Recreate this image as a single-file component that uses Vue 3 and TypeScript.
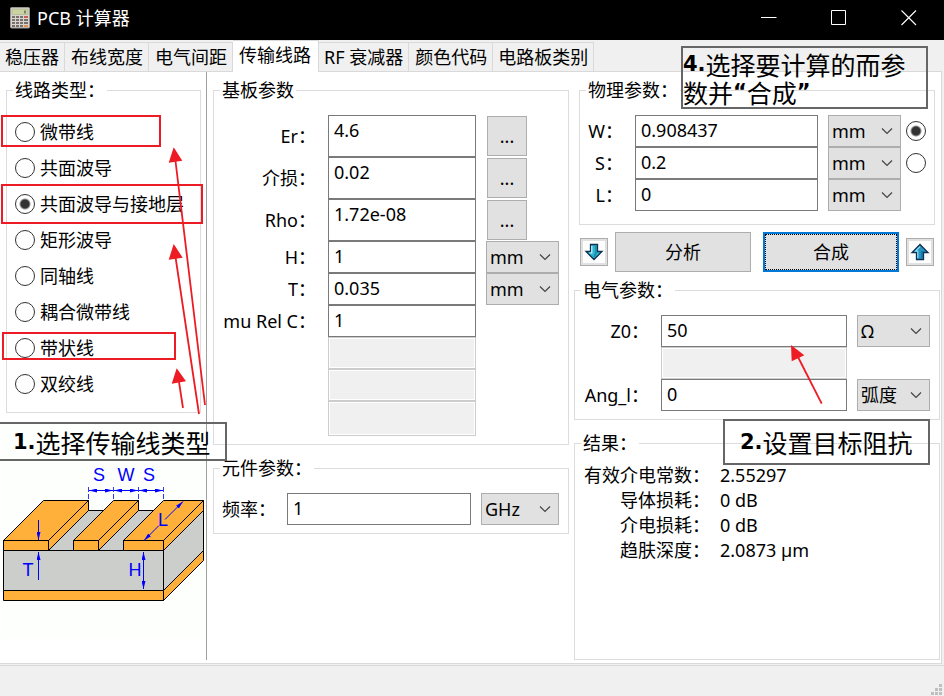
<script setup lang="ts">
import { ref, reactive } from 'vue'

interface Field {
  id: string
  label: string
  value: string
  tall?: boolean
  browse?: boolean
  unit?: string
  disabled?: boolean
  pick?: boolean
}

const tabs = ['稳压器', '布线宽度', '电气间距', '传输线路', 'RF 衰减器', '颜色代码', '电路板类别']
const activeTab = ref(3)

const lineTypes = ['微带线', '共面波导', '共面波导与接地层', '矩形波导', '同轴线', '耦合微带线', '带状线', '双绞线']
const lineType = ref('共面波导与接地层')

const substrate = reactive<Field[]>([
  { id: 'er', label: 'Er：', value: '4.6', tall: true, browse: true },
  { id: 'tand', label: '介损：', value: '0.02', tall: true, browse: true },
  { id: 'rho', label: 'Rho：', value: '1.72e-08', tall: true, browse: true },
  { id: 'h', label: 'H：', value: '1', unit: 'mm' },
  { id: 't', label: 'T：', value: '0.035', unit: 'mm' },
  { id: 'murel', label: 'mu Rel C：', value: '1' },
  { id: 'sub7', label: '', value: '', disabled: true },
  { id: 'sub8', label: '', value: '', disabled: true },
  { id: 'sub9', label: '', value: '', disabled: true },
])

const physical = reactive<Field[]>([
  { id: 'w', label: 'W：', value: '0.908437', unit: 'mm', pick: true },
  { id: 's', label: 'S：', value: '0.2', unit: 'mm', pick: true },
  { id: 'l', label: 'L：', value: '0', unit: 'mm' },
])
const target = ref('w')

const electrical = reactive<Field[]>([
  { id: 'z0', label: 'Z0：', value: '50', unit: 'Ω' },
  { id: 'el2', label: '', value: '', disabled: true },
  { id: 'ang', label: 'Ang_l：', value: '0', unit: '弧度' },
])

const frequency = ref('1')
const frequencyUnit = ref('GHz')

const unitChoices: Record<string, string[]> = {
  mm: ['mm', 'mil', 'cm'],
  'Ω': ['Ω', 'kΩ'],
  '弧度': ['弧度', '度'],
}
const choicesFor = (unit: string): string[] => Object.values(unitChoices).find((c) => c.includes(unit)) ?? [unit]

const results = [
  { name: '有效介电常数：', value: '2.55297' },
  { name: '导体损耗：', value: '0 dB' },
  { name: '介电损耗：', value: '0 dB' },
  { name: '趋肤深度：', value: '2.0873 µm' },
]
</script>

<template>
  <div class="window" lang="zh-CN">
    <header class="titlebar">
      <svg class="app-icon" width="20" height="22" viewBox="0 0 20 22" aria-hidden="true">
        <rect x="0.5" y="0.5" width="19" height="20.5" rx="1" fill="#d8d4cf" stroke="#9a9590" />
        <rect x="2" y="2" width="16" height="5.5" fill="#c9d3a4" stroke="#a9b088" stroke-width="0.6" />
        <path d="M14 3.5h2v3h-2z" fill="#7c8466" />
        <g fill="#77716d">
          <path d="M2 9h3v2H2zM6 9h3v2H6zM10 9h3v2h-3zM2 12h3v2H2zM6 12h3v2H6zM10 12h3v2h-3zM14 12h4v2h-4zM2 15h3v2H2zM6 15h3v2H6zM10 15h3v2h-3zM14 15h4v2h-4zM2 18h3v2H2zM6 18h3v2H6zM10 18h3v2h-3z" />
        </g>
        <path d="M14 9h4v2h-4z" fill="#c8605a" />
        <path d="M14 18h4v2h-4z" fill="#e09050" />
      </svg>
      <h1 class="title">PCB 计算器</h1>
      <div class="window-buttons">
        <button type="button" aria-label="最小化">
          <svg width="16" height="16" viewBox="0 0 16 16"><path d="M0 7.5h15.5" stroke="#fff" fill="none" /></svg>
        </button>
        <button type="button" aria-label="最大化">
          <svg width="16" height="16" viewBox="0 0 16 16"><path d="M0.5 0.5h14v14h-14z" stroke="#fff" fill="none" /></svg>
        </button>
        <button type="button" aria-label="关闭">
          <svg width="16" height="16" viewBox="0 0 16 16"><path d="M0.5 0.5l14.5 14.5M15 0.5l-14.5 14.5" stroke="#fff" stroke-width="1.1" fill="none" /></svg>
        </button>
      </div>
    </header>

    <div class="tabs" role="tablist">
      <button
        v-for="(tab, i) in tabs"
        :key="tab"
        type="button"
        role="tab"
        class="tab"
        :class="{ active: i === activeTab }"
        :aria-selected="i === activeTab"
        @click="activeTab = i"
      >{{ tab }}</button>
    </div>

    <main class="page">
      <section class="col-left">
        <fieldset class="group types">
          <legend>线路类型：</legend>
          <label v-for="name in lineTypes" :key="name" class="type-row">
            <input v-model="lineType" type="radio" class="radio" name="line-type" :value="name" />
            <span>{{ name }}</span>
          </label>
        </fieldset>

        <svg class="diagram" width="204" height="217" viewBox="2 421 204 217" role="img" aria-label="共面波导与接地层">
          <defs>
            <marker id="tip" viewBox="0 0 8 4" refX="8" refY="2" markerWidth="8" markerHeight="4" orient="auto-start-reverse" markerUnits="userSpaceOnUse">
              <path d="M0 0L8 2L0 4z" fill="#00f" />
            </marker>
          </defs>
          <rect x="2" y="421" width="204" height="217" fill="#fcfffc" />
          <g stroke="#000" stroke-linejoin="round">
            <g fill="#cccecb">
              <path d="M3.5 550.5L43.5 510.5H203.5L163.5 550.5z" />
              <path d="M3.5 550.5H163.5V590.5H3.5z" />
              <path d="M163.5 550.5L203.5 510.5V550.5L163.5 590.5z" />
            </g>
            <g fill="#ffb03b">
              <path d="M3.5 590.5H163.5V600.5H3.5z" />
              <path d="M163.5 590.5L203.5 550.5V560.5L163.5 600.5z" />
              <path d="M3.5 540.5H48.5V550.5H3.5zM3.5 540.5L43.5 500.5H88.5L48.5 540.5zM48.5 540.5L88.5 500.5V510.5L48.5 550.5z" />
              <path d="M73.5 540.5H98.5V550.5H73.5zM73.5 540.5L113.5 500.5H138.5L98.5 540.5zM98.5 540.5L138.5 500.5V510.5L98.5 550.5z" />
              <path d="M123.5 540.5H163.5V550.5H123.5zM123.5 540.5L163.5 500.5H203.5L163.5 540.5zM163.5 540.5L203.5 500.5V510.5L163.5 550.5z" />
            </g>
          </g>
          <g stroke="#00f" fill="none">
            <path d="M88.5 487V500M113.5 487V500M138.5 487V500M163.5 487V500" stroke-dasharray="5 2" stroke-width="0.8" />
            <path d="M89 490.5H113" marker-start="url(#tip)" marker-end="url(#tip)" />
            <path d="M114 490.5H138" marker-start="url(#tip)" marker-end="url(#tip)" />
            <path d="M139 490.5H163" marker-start="url(#tip)" marker-end="url(#tip)" />
            <path d="M144 540.5L159 525.5" marker-start="url(#tip)" />
            <path d="M165 519.5L183 501.5" marker-end="url(#tip)" />
            <path d="M38.5 520V540" marker-end="url(#tip)" />
            <path d="M38.5 580V552" marker-end="url(#tip)" />
            <path d="M143.5 552V589" marker-start="url(#tip)" marker-end="url(#tip)" />
          </g>
          <g class="diagram-text">
            <text x="99" y="481">S</text>
            <text x="126" y="481">W</text>
            <text x="149" y="481">S</text>
            <text x="163" y="526">L</text>
            <text x="28" y="576">T</text>
            <text x="135" y="576">H</text>
          </g>
        </svg>

        <svg class="marks" width="207" height="420" viewBox="0 0 207 420" aria-hidden="true">
          <g stroke="#ed1c24" fill="none" stroke-width="2">
            <rect x="2" y="44" width="158" height="30" />
            <rect x="2" y="113" width="200" height="38" />
            <rect x="3" y="261" width="172" height="26" />
          </g>
          <g stroke="#ed1c24" stroke-width="1.8">
            <path d="M205 333L175 85M199 342L175.500 185M183 336L179 310" fill="none" />
          </g>
          <path d="M173.700 75.300L168.700 90.700L182.300 88.700zM173.700 172L168.700 187.700L182.700 185.700zM176.700 296.300L171.700 311.700L186 309.300z" fill="#ed1c24" />
        </svg>
        <p class="note note-type"><b>1.</b><span>选择传输线类型</span></p>
      </section>

      <section class="col-mid">
        <fieldset class="group">
          <legend>基板参数</legend>
          <div class="substrate">
            <template v-for="f in substrate" :key="f.id">
              <label :for="f.id" class="name">{{ f.label }}</label>
              <input :id="f.id" v-model="f.value" type="text" class="box" :class="{ tall: f.tall }" :disabled="f.disabled" />
              <div class="extra">
                <button v-if="f.browse" type="button" class="browse">...</button>
                <span v-if="f.unit" class="unit">
                  <select v-model="f.unit" :aria-label="f.label">
                    <option v-for="u in choicesFor(f.unit)" :key="u">{{ u }}</option>
                  </select>
                  <svg width="12" height="8" viewBox="0 0 12 8"><path d="M1 1.500L6 6.500L11 1.500" stroke="#444" stroke-width="1.2" fill="none" /></svg>
                </span>
              </div>
            </template>
          </div>
        </fieldset>

        <fieldset class="group">
          <legend>元件参数：</legend>
          <div class="component">
            <label for="freq">频率：</label>
            <input id="freq" v-model="frequency" type="text" class="box" />
            <span class="unit">
              <select v-model="frequencyUnit" aria-label="频率">
                <option>GHz</option>
                <option>MHz</option>
                <option>kHz</option>
              </select>
              <svg width="12" height="8" viewBox="0 0 12 8"><path d="M1 1.500L6 6.500L11 1.500" stroke="#444" stroke-width="1.2" fill="none" /></svg>
            </span>
          </div>
        </fieldset>
      </section>

      <section class="col-right">
        <fieldset class="group phys">
          <legend>物理参数：</legend>
          <div class="physical">
            <template v-for="f in physical" :key="f.id">
              <label :for="f.id" class="name">{{ f.label }}</label>
              <input :id="f.id" v-model="f.value" type="text" class="box" />
              <span class="unit">
                <select v-model="f.unit" :aria-label="f.label">
                  <option v-for="u in choicesFor(f.unit ?? '')" :key="u">{{ u }}</option>
                </select>
                <svg width="12" height="8" viewBox="0 0 12 8"><path d="M1 1.500L6 6.500L11 1.500" stroke="#444" stroke-width="1.2" fill="none" /></svg>
              </span>
              <div class="pick">
                <input v-if="f.pick" v-model="target" type="radio" class="radio" name="target" :value="f.id" :aria-label="f.label" />
              </div>
            </template>
          </div>
        </fieldset>

        <div class="actions">
          <button type="button" class="arrow" aria-label="分析">
            <svg width="22" height="22" viewBox="0 0 22 22">
              <path d="M7.500 3.500H14.500V10.500H19L11 18.500L3 10.500H7.500z" fill="#2fb4cf" stroke="#12304f" stroke-width="1.3" />
              <path d="M8.800 4.800V11.800H6.500" stroke="#b4f0f8" stroke-width="1.3" fill="none" />
              <path d="M13 5V12L11 16" stroke="#1888a8" stroke-width="1.5" fill="none" />
            </svg>
          </button>
          <button type="button" class="action">分析</button>
          <button type="button" class="action default">合成</button>
          <button type="button" class="arrow" aria-label="合成">
            <svg width="22" height="22" viewBox="0 0 22 22">
              <path d="M7.500 18.500H14.500V11.500H19L11 3.500L3 11.500H7.500z" fill="#2394c4" stroke="#12304f" stroke-width="1.3" />
              <path d="M8.800 17.200V10.200H6.500L11 5.600" stroke="#8fdcf0" stroke-width="1.2" fill="none" />
              <path d="M13 17V10" stroke="#1470a0" stroke-width="1.6" fill="none" />
            </svg>
          </button>
        </div>

        <fieldset class="group">
          <legend>电气参数：</legend>
          <div class="electrical">
            <template v-for="f in electrical" :key="f.id">
              <label :for="f.id" class="name">{{ f.label }}</label>
              <input :id="f.id" v-model="f.value" type="text" class="box" :disabled="f.disabled" />
              <div class="extra">
                <span v-if="f.unit" class="unit">
                  <select v-model="f.unit" :aria-label="f.label">
                    <option v-for="u in choicesFor(f.unit)" :key="u">{{ u }}</option>
                  </select>
                  <svg width="12" height="8" viewBox="0 0 12 8"><path d="M1 1.500L6 6.500L11 1.500" stroke="#444" stroke-width="1.2" fill="none" /></svg>
                </span>
              </div>
            </template>
          </div>
        </fieldset>

        <fieldset class="group results-group">
          <legend>结果：</legend>
          <dl class="results">
            <template v-for="r in results" :key="r.name">
              <dt>{{ r.name }}</dt>
              <dd>{{ r.value }}</dd>
            </template>
          </dl>
        </fieldset>

        <svg class="pointer" width="34" height="62" viewBox="0 0 34 62" aria-hidden="true">
          <path d="M8 13L31.700 59.700" stroke="#ed1c24" stroke-width="1.8" fill="none" />
          <path d="M1 1L1.700 17.300L14.300 11.300z" fill="#ed1c24" />
        </svg>
        <div class="note note-target">
          <p><b>4.</b><span>选择要计算的而参</span></p>
          <p><span>数并</span><b>“</b><span>合成</span><b>”</b></p>
        </div>
        <p class="note note-impedance"><b>2.</b><span>设置目标阻抗</span></p>
      </section>
    </main>

    <footer class="statusbar">
      <svg width="12" height="12" viewBox="0 0 12 12" aria-hidden="true">
        <path d="M8 0h3v3h-3zM4 4h3v3h-3zM8 4h3v3h-3zM0 8h3v3h-3zM4 8h3v3h-3zM8 8h3v3h-3z" fill="#bfbfbf" />
      </svg>
    </footer>
  </div>
</template>

<style>
body {
  background: #f0f0f0;
}
</style>

<style scoped>
.window,
.window * {
  box-sizing: border-box;
}
.window {
  display: flex;
  flex-direction: column;
  min-height: 100vh;
  background: #f0f0f0;
  color: #000;
  font: 18px/24px "Noto Sans", "Noto Sans CJK SC", sans-serif;
}
button,
input,
select {
  font: inherit;
  color: inherit;
  margin: 0;
  border-radius: 0;
}

.titlebar {
  display: flex;
  align-items: center;
  height: 40px;
  padding-left: 10px;
  padding-bottom: 5px;
  background: #000;
  color: #fff;
}
.title {
  margin: 0 auto 0 7px;
  font-size: 18px;
  font-weight: 400;
}
.window-buttons {
  display: flex;
}
.window-buttons button {
  display: grid;
  place-items: center;
  width: 70px;
  height: 34px;
  padding: 0;
  border: 0;
  background: none;
}

.tabs {
  display: flex;
  align-items: flex-end;
  height: 31px;
}
.tab {
  height: 29px;
  padding: 0 5px;
  border: 1px solid #d9d9d9;
  border-width: 1px 1px 0 0;
  background: #f0f0f0;
  white-space: nowrap;
}
.tab:nth-child(2),
.tab:nth-child(3),
.tab:nth-child(6) {
  padding-left: 6px;
}
.tab.active {
  position: relative;
  height: 32px;
  margin-bottom: -1px;
  padding: 0 7px 3px 6px;
  background: #fff;
}

.page {
  flex: 1;
  display: flex;
  margin-right: 2px;
  padding: 0 1px 3px 0;
  border: 1px solid #d9d9d9;
  border-left: 0;
  background: #fff;
}
.col-left {
  position: relative;
  flex: none;
  width: 207px;
  margin-right: 6px;
  padding-top: 6px;
  border-right: 1px solid #a0a0a0;
}
.col-mid {
  flex: 356 1 0;
  min-width: 0;
  display: flex;
  flex-direction: column;
  gap: 11px;
  margin-right: 5px;
  padding-top: 6px;
}
.col-right {
  position: relative;
  flex: 366 1 0;
  min-width: 0;
  display: flex;
  flex-direction: column;
  padding-top: 6px;
}

.group {
  min-width: 0;
  margin: 0;
  padding: 13px 9px 8px 6px;
  border: 1px solid #dcdcdc;
}
.group legend {
  height: 24px;
  padding: 0 2px;
}
.types {
  margin: 0 5px 0 6px;
  padding: 12px 0 10px 6px;
}
.type-row {
  display: flex;
  align-items: center;
  gap: 5px;
  height: 36px;
  padding-left: 2px;
  white-space: nowrap;
}
.radio {
  appearance: none;
  flex: none;
  width: 20px;
  height: 20px;
  border: 1px solid #333;
  border-radius: 50%;
  background: #fff;
}
.radio:checked {
  background: radial-gradient(circle, #333 0 4px, #fff 6px);
}

.diagram {
  display: block;
  margin: 8px 0 0 2px;
}
.diagram-text {
  font: 18px "Liberation Sans", sans-serif;
  fill: #00f;
  text-anchor: middle;
}

.substrate,
.component,
.physical,
.electrical {
  display: grid;
  column-gap: 10px;
}
.substrate {
  grid-template-columns: 98px 1fr 73px;
}
.component {
  grid-template-columns: 57px 1fr 78px;
  align-items: center;
}
.component label {
  padding-left: 2px;
}
.physical {
  grid-template-columns: 39px 1fr 73px 15px;
}
.electrical {
  grid-template-columns: 70px 1fr 73px;
}
.name {
  align-self: center;
  padding-right: 2px;
  text-align: right;
  white-space: nowrap;
}
.box {
  width: 100%;
  min-width: 0;
  height: 32px;
  padding: 0 5px 2px;
  border: 1px solid #7a7a7a;
  background: #fff;
  outline: 0;
}
.box.tall {
  height: 42px;
  padding-bottom: 12px;
}
.box:disabled {
  border-color: #ccc;
  background: #f0f0f0;
  box-shadow: inset 0 0 0 1px #fff;
}
.substrate .box:last-of-type {
  height: 35px;
}
.extra {
  display: flex;
  align-items: center;
}
.pick {
  display: flex;
  align-items: center;
  justify-content: flex-end;
}
.browse {
  width: 40px;
  height: 40px;
  margin-left: 1px;
  padding: 0;
  border: 1px solid #adadad;
  background: #e1e1e1;
}
.unit {
  display: grid;
  flex: 1;
  align-items: center;
}
.unit select {
  grid-area: 1 / 1;
  appearance: none;
  width: 100%;
  height: 32px;
  padding: 0 0 0 3px;
  border: 1px solid #adadad;
  background: #e1e1e1;
}
.unit svg {
  grid-area: 1 / 1;
  justify-self: end;
  margin-right: 8px;
  pointer-events: none;
}

.phys {
  margin: 0 5px;
  padding: 13px 8px 13px 6px;
}
.actions {
  display: flex;
  align-items: center;
  margin: 7px 6px 6px;
}
.arrow {
  display: grid;
  place-items: center;
  flex: none;
  width: 28px;
  height: 28px;
  padding: 0;
  border: 1px solid #adadad;
  background: #e1e1e1;
}
.arrow svg {
  background: #fdfdfd;
}
.action {
  flex: 1 1 0;
  width: 0;
  height: 40px;
  margin-left: 7px;
  padding: 0 2px;
  border: 1px solid #adadad;
  background: #e1e1e1;
}
.action.default {
  margin: 0 7px 0 12px;
  padding: 0 1px;
  border: 2px solid #0078d7;
  outline: 1px dotted #000;
  outline-offset: -3px;
}

.results-group {
  flex: 1;
  margin-top: 11px;
  padding-top: 8px;
}
.results {
  display: grid;
  grid-template-columns: 129px 1fr;
  column-gap: 10px;
  margin: 0;
  line-height: 25px;
}
.results dt {
  text-align: right;
  white-space: nowrap;
}
.results dd {
  margin: 0;
}

.marks {
  position: absolute;
  left: 0;
  top: 0;
  pointer-events: none;
}
.pointer {
  position: absolute;
  right: 116px;
  top: 272px;
  pointer-events: none;
}
.note {
  position: absolute;
  margin: 0;
  border: 2px solid #666;
  font: 25px/28px "Noto Sans CJK SC", sans-serif;
  white-space: nowrap;
  pointer-events: none;
}
.note,
.note p {
  display: flex;
  align-items: center;
  margin: 0;
}
.note b {
  font: bold 21px/28px "DejaVu Sans", sans-serif;
}
.note-type {
  left: -2px;
  top: 350px;
  width: 229px;
  height: 39px;
  padding-left: 13px;
}
.note-target {
  right: 12px;
  top: -26px;
  width: 247px;
  height: 63px;
  flex-direction: column;
  align-items: flex-start;
  justify-content: center;
}
.note-impedance {
  right: 10px;
  top: 347px;
  width: 207px;
  height: 46px;
  padding-left: 15px;
}

.statusbar {
  display: flex;
  justify-content: flex-end;
  align-items: flex-end;
  height: 31px;
  margin-top: 1px;
  padding: 0 1px 0 0;
  border-top: 1px solid #d9d9d9;
}
</style>
